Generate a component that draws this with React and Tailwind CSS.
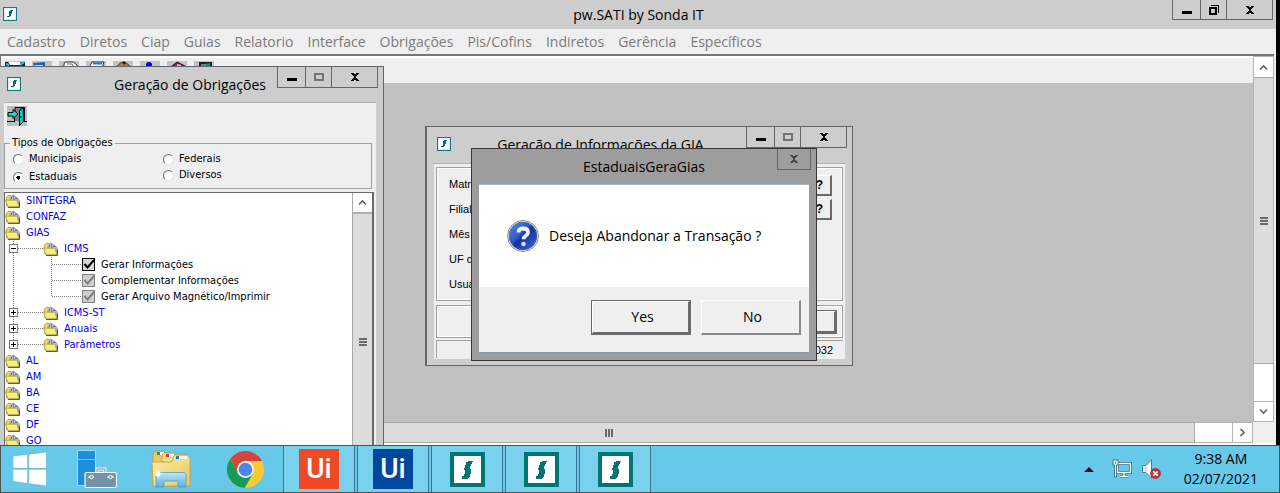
import React from "react";

const menus = [
  "Cadastro",
  "Diretos",
  "Ciap",
  "Guias",
  "Relatorio",
  "Interface",
  "Obrigações",
  "Pis/Cofins",
  "Indiretos",
  "Gerência",
  "Específicos",
];

function SondaIcon({ className }) {
  return (
    <svg viewBox="0 0 35 35" className={className} shapeRendering="crispEdges" aria-hidden="true">
      <rect width="35" height="35" fill="#007672" />
      <rect x="4" y="4" width="27" height="27" fill="#fff" />
      <path
        d="M18 9H23V10H22V12H21V14H20V17H21V22H20V25H19V26H18V27H12V24H14V22H15V18H14V16H15V13H16V10H18Z"
        fill="#007672"
      />
    </svg>
  );
}

function SmallSonda() {
  return (
    <svg viewBox="0 0 14 14" className="size-3.5 shrink-0" shapeRendering="crispEdges" aria-hidden="true">
      <rect width="14" height="14" fill="#0d7f7b" />
      <rect x="1" y="1" width="12" height="12" fill="#d9efee" />
      <rect x="2" y="2" width="10" height="10" fill="#fff" />
      <path d="M7 3h3v1H9v3H8v2H7v1H4V9h2V7h0V4h1z" fill="#00706c" />
    </svg>
  );
}

function Glyph({ kind }) {
  return (
    <svg viewBox="0 0 12 12" className="size-3" shapeRendering="crispEdges" aria-hidden="true">
      {kind === "Minimize" && <path d="M1 7h10v3H1z" fill="#000" />}
      {kind === "Maximize" && <rect x="2" y="3" width="8" height="6" fill="none" stroke="#737373" strokeWidth="2" />}
      {kind === "Restore" && (
        <g fill="none" stroke="#000">
          <rect x="2" y="4" width="6" height="6" strokeWidth="2" />
          <path d="M3 1.500h7.500v7" />
        </g>
      )}
      {kind === "Close" && (
        <path
          d="M2 2h3v1h2V2h3v1H9v1H8v1H7v2h1v1h1v1h1v1H7V9H5v1H2V9h1V8h1V7h1V5H4V4H3V3H2z"
          fill="currentColor"
        />
      )}
    </svg>
  );
}

function WindowButtons({ middle, className }) {
  return (
    <div className={"flex border border-t-0 border-[#62656c] " + className}>
      <button aria-label="Minimize" className="flex w-7 items-center justify-center border-r border-[#62656c]">
        <Glyph kind="Minimize" />
      </button>
      <button aria-label={middle} className="flex w-[26px] items-center justify-center border-r border-[#62656c]">
        <Glyph kind={middle} />
      </button>
      <button aria-label="Close" className="flex w-[45px] items-center justify-center">
        <Glyph kind="Close" />
      </button>
    </div>
  );
}

function Chevron({ className = "" }) {
  return (
    <svg viewBox="0 0 9 9" className={"size-[9px] " + className} aria-hidden="true">
      <path d="M1 6.500 4.500 3 8 6.500" fill="none" stroke="#606060" strokeWidth="1.600" />
    </svg>
  );
}

function Grip({ className = "" }) {
  return (
    <svg viewBox="0 0 8 8" className={"size-2 " + className} shapeRendering="crispEdges" aria-hidden="true">
      <path d="M0 0h8v2H0zM0 3h8v2H0zM0 6h8v2H0z" fill="#6a6a6a" />
    </svg>
  );
}

function Folder() {
  return (
    <svg viewBox="0 0 16 14" className="h-3.5 w-4 shrink-0" aria-hidden="true">
      <path d="M1 4 3 1.500H6L8 3.500 13 4V12H2Z" fill="#e9dc5a" stroke="#8d8740" strokeWidth=".7" />
      <path d="M5 4.500 8 .8 15 7 13 10 5 6Z" fill="#b9bec4" stroke="#85898d" strokeWidth=".8" />
      <path d="M6 4h1M8 3h1M8.500 5h1M10.500 4.500h1" stroke="#1c35a8" strokeWidth="1" />
      <path d="M.5 6.200H12L14 12.800H3Z" fill="#f6ee7c" stroke="#a39a3a" strokeWidth=".8" />
      <path d="M3 13.400H14.500V8" fill="none" stroke="#4b4b4b" />
    </svg>
  );
}

function BranchLines({ last, sign }) {
  return (
    <svg viewBox="0 0 38 16" className="h-4 w-[38px] shrink-0" shapeRendering="crispEdges" aria-hidden="true">
      <path d={last ? "M8.500 0V8" : "M8.500 0V16"} stroke="#808080" strokeDasharray="1 1" />
      <path d="M13 7.500H38" stroke="#808080" strokeDasharray="1 1" />
      <rect x="4.500" y="3.500" width="8" height="8" fill="#fff" stroke="#777" />
      <path d={sign === "-" ? "M6 7.500H11" : "M6 7.500H11M8.500 5V10"} stroke="#000" />
    </svg>
  );
}

function LeafLines({ last }) {
  return (
    <svg viewBox="0 0 76 16" className="h-4 w-[76px] shrink-0" shapeRendering="crispEdges" aria-hidden="true">
      <path d="M8.500 0V16" stroke="#808080" strokeDasharray="1 1" />
      <path d={last ? "M46.500 0V8" : "M46.500 0V16"} stroke="#808080" strokeDasharray="1 1" />
      <path d="M47 7.500H76" stroke="#808080" strokeDasharray="1 1" />
    </svg>
  );
}

function Root({ name, children }) {
  return (
    <li>
      <div className="flex h-4 items-center gap-[5px]">
        <Folder />
        <span className="text-[#0000f0]">{name}</span>
      </div>
      {children}
    </li>
  );
}

function Branch({ name, sign = "+", last, children }) {
  return (
    <li>
      <div className="flex h-4 items-center">
        <button aria-label={"Expandir " + name} className="flex">
          <BranchLines last={last} sign={sign} />
        </button>
        <Folder />
        <span className="ml-[5px] text-[#0000f0]">{name}</span>
      </div>
      {children}
    </li>
  );
}

function Leaf({ name, dim, last }) {
  return (
    <li>
      <label className="flex h-4 items-start">
        <LeafLines last={last} />
        <span className="mt-px ml-px grid size-[13px] shrink-0">
          <input
            type="checkbox"
            defaultChecked
            className={
              "col-start-1 row-start-1 size-[13px] appearance-none border " +
              (dim ? "border-[#808080] bg-[#d0d0d0]" : "border-black bg-[#d8d8d8]")
            }
          />
          <svg viewBox="0 0 13 13" className="pointer-events-none col-start-1 row-start-1 size-[13px]" aria-hidden="true">
            <path d="M2.500 6 5.500 9.500 12 2" fill="none" stroke={dim ? "#808080" : "#000"} strokeWidth="2" />
          </svg>
        </span>
        <span className="ml-1.5">{name}</span>
      </label>
    </li>
  );
}

function Radio({ name, checked }) {
  return (
    <label className="flex h-4 items-center gap-[5px]">
      <input
        type="radio"
        name="tipo"
        defaultChecked={checked}
        className="size-[11px] appearance-none rounded-full border border-t-[#707070] border-r-[#e8e8e8] border-b-[#e8e8e8] border-l-[#707070] bg-white bg-center checked:bg-[radial-gradient(circle,#000_0_2px,#fff_2px)]"
      />
      {name}
    </label>
  );
}

function ToolIcon({ children }) {
  return (
    <button aria-hidden="true" tabIndex={-1} className="flex bg-[#c3c3c3]">
      <svg viewBox="0 0 20 20" className="size-5">{children}</svg>
    </button>
  );
}

function Toolbar() {
  return (
    <div className="flex h-[27px] shrink-0 items-start gap-[7px] border-t-2 border-white bg-[#efefef] pt-[3px] pl-1">
      <ToolIcon>
        <path d="M0 1h3l2 3h9l2-3h4v6H0z" fill="#222" />
        <path d="M4 1h11v3H5z" fill="#fff" />
        <path d="M1 3l3 1M15 4l4-3" stroke="#13d6dc" strokeWidth="2" />
      </ToolIcon>
      <ToolIcon>
        <path d="M1 2l12-1v4H2z" fill="#1767b5" />
        <path d="M3 4h8v3H3z" fill="#b5dbf7" />
      </ToolIcon>
      <ToolIcon>
        <path d="M6 1h8l4 3v3H5V3z" fill="#fff" stroke="#333" />
        <path d="M8 3h5l2 3" stroke="#666" fill="none" />
      </ToolIcon>
      <ToolIcon>
        <path d="M6 1h12l-2 6H3z" fill="#fff" stroke="#333" />
        <path d="M7 2.500h9" stroke="#2876c6" strokeWidth="2" />
      </ToolIcon>
      <ToolIcon>
        <path d="M4 5 8 1.500 12 1l5 4v3H4z" fill="#b47b31" stroke="#5b3b12" />
        <path d="M10 1l2 2" stroke="#111" strokeWidth="2" />
      </ToolIcon>
      <ToolIcon>
        <circle cx="9" cy="4" r="3" fill="#0000f5" />
      </ToolIcon>
      <ToolIcon>
        <path d="M5 5l5-4 8 4-3 4z" fill="#8d118a" stroke="#32052f" />
        <path d="M10 4l4 1" stroke="#f0d33c" strokeWidth="2" />
      </ToolIcon>
      <ToolIcon>
        <path d="M5 1h13v8H5z" fill="#222" />
        <path d="M7 3h5v6H7z" fill="#777" />
        <path d="M12 3l4-1v8h-4z" fill="#128c88" />
      </ToolIcon>
    </div>
  );
}

function ExitIcon() {
  return (
    <svg viewBox="0 0 20 20" className="size-5" aria-hidden="true">
      <rect width="20" height="20" fill="#bdbdbd" />
      <path d="M0 15.500h7M17 15.500h3" stroke="#000" />
      <path d="M8 1h10v14H8z" fill="#808080" />
      <path d="M8 5V1.500H17.500V16M7.500 11v5" stroke="#000" fill="none" />
      <path d="M1 6.500H6V3.500L11 8 6 12.500V10H1Z" fill="#00e5e5" stroke="#000" />
      <path d="M12.500 4.500 16.500 1.500V15.500L12.500 19.500Z" fill="#00b4b8" stroke="#000" />
      <path d="M14 5v12" stroke="#00f0f0" />
      <path d="M14 10v2" stroke="#000" />
    </svg>
  );
}

function ObligationsWindow() {
  return (
    <section className="absolute top-[66px] bottom-0 left-0 z-10 flex w-96 flex-col border-t border-r border-[#62656c] bg-[#cdcdcd]">
      <header className="flex h-[35px] shrink-0 items-start pr-[5px]">
        <span className="pt-2.5 pl-[7px]">
          <SmallSonda />
        </span>
        <h2 className="flex-1 pt-2 pr-[11px] text-right text-sm leading-5">Geração de Obrigações</h2>
        <WindowButtons middle="Maximize" className="h-[21px]" />
      </header>
      <div className="mr-[7px] ml-1 flex min-h-0 flex-1 flex-col border-t border-[#b0b0b0] bg-[#efefef] font-['DejaVu_Sans_Condensed',sans-serif] text-[11px] leading-4">
        <div className="flex h-8 shrink-0 items-start px-[3px] pt-[3px]">
          <button aria-label="Sair">
            <ExitIcon />
          </button>
        </div>
        <fieldset className="mr-1 h-[54px] shrink-0 border border-[#a0a0a0] pl-[5px]">
          <legend className="px-0.5">Tipos de Obrigações</legend>
          <div className="grid grid-cols-[150px_1fr] items-start pl-[3px]">
            <div className="flex flex-col gap-0.5">
              <Radio name="Municipais" />
              <Radio name="Estaduais" checked />
            </div>
            <div className="flex flex-col">
              <Radio name="Federais" />
              <Radio name="Diversos" />
            </div>
          </div>
        </fieldset>
        <div className="mt-[3px] mr-0.5 flex min-h-0 flex-1 border-t border-r-2 border-l border-[#696969] bg-white">
          <ul className="min-w-0 flex-1 overflow-hidden">
            <Root name="SINTEGRA" />
            <Root name="CONFAZ" />
            <Root name="GIAS">
              <ul>
                <Branch name="ICMS" sign="-">
                  <ul>
                    <Leaf name="Gerar Informações" />
                    <Leaf name="Complementar Informações" dim />
                    <Leaf name="Gerar Arquivo Magnético/Imprimir" dim last />
                  </ul>
                </Branch>
                <Branch name="ICMS-ST" />
                <Branch name="Anuais" />
                <Branch name="Parâmetros" last />
              </ul>
            </Root>
            <Root name="AL" />
            <Root name="AM" />
            <Root name="BA" />
            <Root name="CE" />
            <Root name="DF" />
            <Root name="GO" />
          </ul>
          <div className="flex w-5 flex-col border-l border-[#a8a8a8] bg-[#dcdcdc]">
            <button aria-label="Rolar para cima" className="flex h-[21px] shrink-0 items-center justify-center border-b-2 border-[#b0b0b0] bg-white">
              <Chevron />
            </button>
            <div className="flex flex-1 items-center justify-center pt-6">
              <Grip />
            </div>
          </div>
        </div>
      </div>
    </section>
  );
}

const etched = "border border-[#a0a0a0] outline-1 -outline-offset-2 outline-white";
const raised = "border-t border-l border-r-2 border-b-2 border-t-white border-l-white border-r-[#6b6b6b] border-b-[#6b6b6b] bg-[#efefef]";

function GiaWindow() {
  return (
    <section className="absolute top-[126px] left-[425px] z-10 flex h-60 w-[428px] flex-col border border-l-2 border-[#62656c] bg-[#cdcdcd]">
      <header className="flex h-9 shrink-0 items-start pr-[5px]">
        <span className="pt-2.5 pl-[10px]">
          <SmallSonda />
        </span>
        <h2 className="flex-1 pt-2 pl-1 text-center text-sm leading-5">Geração de Informações da GIA</h2>
        <WindowButtons middle="Maximize" className="h-[21px]" />
      </header>
      <div className="mx-[7px] mb-1.5 flex flex-1 flex-col border-t border-[#b0b0b0] bg-[#efefef] px-0.5 pt-[3px] font-['Liberation_Sans',sans-serif] text-[11px] leading-4">
        <div className={"flex h-[134px] justify-between pr-2.5 pl-3 " + etched}>
          <div className="flex flex-col gap-[9px] pt-2">
            <span>Matriz</span>
            <span>Filial</span>
            <span>Mês</span>
            <span>UF d</span>
            <span>Usuário</span>
          </div>
          <div className="flex flex-col gap-[3px] pt-[7px]">
            <button className={"h-[21px] w-6 text-xs font-bold " + raised}>?</button>
            <button className={"h-[21px] w-6 text-xs font-bold " + raised}>?</button>
          </div>
        </div>
        <div className={"mt-1 flex h-[33px] items-center justify-end pr-1.5 " + etched}>
          <button aria-label="Fechar" className={"h-[22px] w-20 outline-1 outline-[#6b6b6b] " + raised} />
        </div>
        <div className="mt-0.5 flex h-[18px] items-center justify-end border-t border-l border-[#a0a0a0] pr-2.5">032</div>
      </div>
    </section>
  );
}

function QuestionIcon() {
  return (
    <svg viewBox="0 0 32 32" className="size-8 shrink-0" aria-hidden="true">
      <defs>
        <linearGradient id="ball" x1="0" y1="0" x2="1" y2="1">
          <stop offset="0" stopColor="#5b8be0" />
          <stop offset=".42" stopColor="#2b59c8" />
          <stop offset=".5" stopColor="#12339c" />
          <stop offset="1" stopColor="#3f66e0" />
        </linearGradient>
      </defs>
      <circle cx="16" cy="16" r="15.500" fill="#fff" stroke="#8a8a8a" />
      <circle cx="16" cy="16" r="14" fill="url(#ball)" stroke="#5c6a88" strokeWidth=".8" />
      <path
        d="M11.500 12.500C11.500 9.500 13 8.500 16.200 8.500s4.800 1.500 4.800 3.700c0 3.600-4.500 3.600-4.500 7.100"
        fill="none"
        stroke="#f4f4f8"
        strokeWidth="3.800"
      />
      <circle cx="16.500" cy="24" r="2.300" fill="#dcdff0" />
    </svg>
  );
}

function ConfirmDialog() {
  return (
    <section
      role="dialog"
      aria-labelledby="confirm-title"
      className="absolute top-[148px] left-[471px] z-20 flex h-[213px] w-[346px] flex-col border border-[#35353a] bg-[#9d9d9d] px-[7px] pb-[7px]"
    >
      <header className="grid h-[35px] shrink-0 grid-cols-[1fr_auto_1fr] items-start">
        <h2 id="confirm-title" className="col-start-2 pt-2 text-sm leading-5">
          EstaduaisGeraGias
        </h2>
        <button
          aria-label="Close"
          className="mr-[-2px] flex h-[21px] w-[34px] items-center justify-center justify-self-end border border-t-0 border-[#62656c] text-[#4a4a4a]"
        >
          <Glyph kind="Close" />
        </button>
      </header>
      <div className="flex flex-1 flex-col border-b border-[#8c99a8] bg-[#efefef]">
        <div className="flex flex-1 items-center gap-2.5 border-t border-[#a8b4c0] bg-white pl-7 text-sm">
          <QuestionIcon />
          <p>Deseja Abandonar a Transação ?</p>
        </div>
        <div className="flex justify-end gap-2.5 pt-[13px] pr-2 pb-[17px] text-sm">
          <button className="h-[35px] w-[100px] border border-[#6b6b6b]">
            <span className={"flex h-full items-center justify-center pl-1 " + raised}>Yes</span>
          </button>
          <button className="h-[35px] w-[100px] border-t border-l border-r-2 border-b-2 border-t-white border-l-white border-r-[#8a8a8a] border-b-[#8a8a8a] pl-1">
            No
          </button>
        </div>
      </div>
    </section>
  );
}

function StartIcon() {
  return (
    <svg viewBox="0 0 34 34" className="size-[34px]" aria-hidden="true">
      <path d="M0 4 14.700 2.300V16.300H0ZM15.700 2.200 33.500 0V16.300H15.700ZM0 17.300H14.700V31.500L0 29.500ZM15.700 17.300H33.500V34L15.700 31.700Z" fill="#fff" stroke="#4ba3c4" strokeWidth=".5" />
    </svg>
  );
}

function ServerIcon() {
  return (
    <svg viewBox="0 0 40 38" className="h-[38px] w-10" aria-hidden="true">
      <path d="M.5.500H18.500V35.500H.5Z" fill="#1f8fdd" stroke="#a9dcf3" />
      <path d="M0 9.500H19" stroke="#7cc5f2" />
      <path d="M20 23V19H28V23" fill="none" stroke="#f3fafc" strokeWidth="3" />
      <path d="M20 23V19H28V23" fill="none" stroke="#76909f" strokeWidth="1" />
      <rect x="8" y="22.500" width="31.500" height="15" rx="1.500" fill="#7593a7" stroke="#f3fafc" strokeWidth="1.200" />
      <path d="M11 27H17M30 27H37" stroke="#fff" />
      <circle cx="14.500" cy="27" r="1.700" fill="#7593a7" stroke="#fff" />
      <circle cx="33.500" cy="27" r="1.700" fill="#7593a7" stroke="#fff" />
    </svg>
  );
}

function ExplorerIcon() {
  return (
    <svg viewBox="0 0 40 38" className="h-[38px] w-10" aria-hidden="true">
      <defs>
        <linearGradient id="fold" x1="0" y1="0" x2="1" y2="1">
          <stop offset="0" stopColor="#fbeeb0" />
          <stop offset="1" stopColor="#ecc755" />
        </linearGradient>
        <linearGradient id="stand" x1="0" y1="0" x2="0" y2="1">
          <stop offset="0" stopColor="#bfe6f5" />
          <stop offset="1" stopColor="#54b4dd" />
        </linearGradient>
      </defs>
      <path d="M2 35V4L4 1H13L15 4H34V35Z" fill="#e8cb68" stroke="#bd9a40" />
      <path d="M6 2h3v3H6z" fill="#2d9c46" />
      <path d="M9 2h4v3H9z" fill="#fff" />
      <path d="M11 8V5L13 3H23L25 7H37V35H11Z" fill="#f3dd86" stroke="#c6a44b" />
      <path d="M15 4h3v3h-3z" fill="#dc3b2c" />
      <path d="M18 4h5v3h-5z" fill="#fff" />
      <path d="M1 12H20L22 9V7L24 5H37L39 8V36H2Z" fill="url(#fold)" stroke="#c8a545" />
      <path d="M25 6h3v3h-3z" fill="#2379c3" />
      <path d="M28 6h8v3h-8z" fill="#fff" />
      <path d="M5 37V25Q5 22.500 7 22.500H33Q35 22.500 35 25V37H27V32Q27 31 26 31H14Q13 31 13 32V37Z" fill="url(#stand)" stroke="#4a9fc5" strokeWidth=".8" />
      <path d="M7 18v10M2 23h10M4 20l6 6M10 20l-6 6" stroke="#fff" strokeWidth=".8" opacity=".7" />
      <circle cx="7" cy="24" r="2.500" fill="#fff" />
    </svg>
  );
}

function ChromeIcon() {
  return (
    <svg viewBox="0 0 48 48" className="size-[37px]" aria-hidden="true">
      <circle cx="24" cy="24" r="24" fill="#fbc934" />
      <path d="M4.500 10A24 24 0 0 1 45.400 13H24L14.500 29.500Z" fill="#d6453b" />
      <path d="M4.500 10 14.500 29.500 24 35 33.500 29.500 23 48A24 24 0 0 1 4.500 10Z" fill="#169a57" />
      <circle cx="24" cy="24" r="11" fill="#f4f4f4" />
      <circle cx="24" cy="24" r="8.800" fill="#4b87f0" />
    </svg>
  );
}

function TaskItem({ label, children }) {
  return (
    <button aria-label={label} className="flex w-[72px] items-center justify-center border-x border-[#3b7890] bg-[#7ad1ee]">
      {children}
    </button>
  );
}

function Taskbar() {
  return (
    <footer className="flex h-12 shrink-0 items-stretch border border-[#4c5458] bg-[#66c9ea]">
      <div className="flex flex-1 items-stretch">
        <button aria-label="Start" className="flex w-[58px] items-center justify-center">
          <StartIcon />
        </button>
        <button aria-label="Server Manager" className="flex w-[76px] items-center justify-center">
          <ServerIcon />
        </button>
        <button aria-label="File Explorer" className="flex w-[72px] items-center justify-center">
          <ExplorerIcon />
        </button>
        <button aria-label="Chrome" className="flex w-[76px] items-center justify-center">
          <ChromeIcon />
        </button>
        <div className="flex gap-0.5">
          <TaskItem label="UiPath Assistant">
            <span className="flex size-10 items-center justify-center bg-[#f04a24] font-['Roboto',sans-serif] text-[28px] font-medium text-white">Ui</span>
          </TaskItem>
          <TaskItem label="UiPath Studio">
            <span className="flex size-10 items-center justify-center bg-[#00479d] font-['Roboto',sans-serif] text-[28px] font-medium text-white">Ui</span>
          </TaskItem>
          <TaskItem label="pw.SATI">
            <SondaIcon className="size-[35px]" />
          </TaskItem>
          <TaskItem label="pw.SATI">
            <SondaIcon className="size-[35px]" />
          </TaskItem>
          <TaskItem label="pw.SATI">
            <SondaIcon className="size-[35px]" />
          </TaskItem>
        </div>
      </div>
      <div className="flex items-center pr-[21px]">
        <button aria-label="Show hidden icons" className="mr-[18px]">
          <svg viewBox="0 0 10 5" className="h-[5px] w-2.5" aria-hidden="true">
            <path d="M5 0 10 5H0Z" fill="#1a1a1a" />
          </svg>
        </button>
        <svg viewBox="0 0 20 20" className="mr-2.5 size-5" aria-hidden="true">
          <path d="M5.500 4.500H18.500V13.500H5.500ZM12 14v3M8 17.500h8" fill="none" stroke="#37677a" strokeWidth="3" />
          <path d="M5.500 4.500H18.500V13.500H5.500ZM12 14v3M8 17.500h8" fill="none" stroke="#fff" strokeWidth="1.300" />
          <path d="M1 1h5v5H4.500v12H2.500V6H1Z" fill="#fff" stroke="#37677a" strokeWidth=".9" />
          <path d="M3 2.500h1v2H3z" fill="#37677a" />
        </svg>
        <svg viewBox="0 0 20 20" className="mr-[22px] size-5" aria-hidden="true">
          <path d="M.5 6.500H4L9.500.800V19.200L4 13.500H.5Z" fill="#fff" stroke="#467f94" />
          <path d="M4 6.500v7" stroke="#9dbfcc" />
          <circle cx="13.500" cy="14.500" r="5" fill="#d92b2b" stroke="#a31a1a" strokeWidth=".6" />
          <path d="M11.300 12.300l4.400 4.400M15.700 12.300l-4.400 4.400" stroke="#fff" strokeWidth="1.700" />
        </svg>
        <div className="text-center text-sm leading-5">
          <div>9:38 AM</div>
          <div>02/07/2021</div>
        </div>
      </div>
    </footer>
  );
}

export default function App() {
  return (
    <div className="flex h-screen flex-col overflow-hidden bg-black font-['Open_Sans',sans-serif] text-black">
      <main className="relative mr-1 flex min-h-0 flex-1 flex-col overflow-hidden bg-[#efefef]">
        <header className="flex h-[29px] shrink-0 items-start bg-[#cdcdcd] pr-[3px]">
          <span className="pt-[7px] pl-[3px]">
            <SmallSonda />
          </span>
          <h1 className="flex-1 pt-[5px] pl-[88px] text-center text-sm leading-5">pw.SATI by Sonda IT</h1>
          <WindowButtons middle="Restore" className="h-5" />
        </header>
        <nav className="flex h-[25px] shrink-0 items-center gap-3.5 pl-[7px] text-sm leading-5 text-[#7b7b7b]">
          {menus.map((m) => (
            <button key={m}>{m}</button>
          ))}
        </nav>
        <div className="mr-0.5 flex min-h-0 flex-1 flex-col border-t-2 border-l border-[#75777a]">
          <div className="flex min-h-0 flex-1">
            <div className="flex min-w-0 flex-1 flex-col bg-[#c0c0c0]">
              <Toolbar />
            </div>
            <div className="flex w-[21px] shrink-0 flex-col border border-[#b4b4b4] bg-white">
              <button aria-label="Rolar para cima" className="flex h-5 shrink-0 items-center justify-center">
                <Chevron />
              </button>
              <div className="flex flex-1 items-center justify-center border-y border-[#a8a8a8] bg-[#dcdcdc]">
                <Grip />
              </div>
              <div className="h-[37px] shrink-0" />
              <button aria-label="Rolar para baixo" className="flex h-5 shrink-0 items-center justify-center border-t border-[#b4b4b4]">
                <Chevron className="rotate-180" />
              </button>
            </div>
          </div>
          <div className="flex h-[23px] shrink-0 border-b-2 border-white">
            <div className="flex flex-1 items-center justify-center border border-[#a8a8a8] bg-[#dcdcdc] pl-[22px]">
              <Grip className="rotate-90" />
            </div>
            <div className="w-[37px] border-y border-[#b4b4b4] bg-white" />
            <button aria-label="Rolar para a direita" className="mr-[21px] flex w-[21px] items-center justify-center border border-[#b4b4b4] bg-white">
              <Chevron className="rotate-90" />
            </button>
          </div>
        </div>
        <ObligationsWindow />
        <GiaWindow />
        <ConfirmDialog />
      </main>
      <Taskbar />
    </div>
  );
}
